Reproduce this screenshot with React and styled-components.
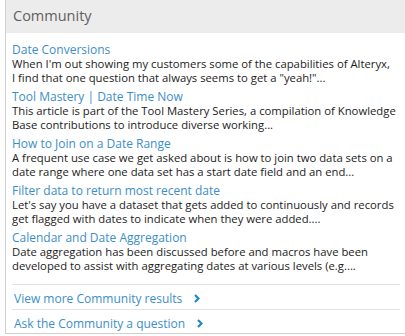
import React from "react";
import styled, { createGlobalStyle } from "styled-components";

const GlobalStyle = createGlobalStyle`
  body {
    margin: 0;
    background: #fff;
    font-family: "Segoe UI", "Open Sans", "Liberation Sans", sans-serif;
  }
`;

const Panel = styled.div`
  margin-left: 5px;
  width: 400px;
  height: 334px;
  box-sizing: border-box;
  border-left: 1px solid #cfcfcf;
  border-bottom: 1px solid #cfcfcf;
`;

const Header = styled.div`
  height: 33px;
  box-sizing: border-box;
  background: #ececec;
  padding: 6px 0 0 7px;
  font-size: 14.5px;
  line-height: 20px;
  color: #5f5f5f;
`;

const List = styled.div`
  padding: 10px 0 0 6px;
  display: flex;
  flex-direction: column;
  gap: 5px;
`;

const Item = styled.div`
  line-height: 14px;
`;

const Title = styled.a`
  display: block;
  font-size: 12px;
  color: #3c8ec8;
  text-decoration: none;
`;

const Summary = styled.p`
  margin: 0;
  font-size: 11.3px;
  white-space: pre-line;
  color: #1c1c1c;
`;

const Footer = styled.div`
  margin: 11px 0 0 6px;
  width: 388px;
`;

const FooterLink = styled.a`
  display: flex;
  align-items: center;
  gap: 12px;
  height: 22px;
  border-top: 1px solid #e3e3e3;
  padding: 2px 0 0 2px;
  box-sizing: content-box;
  font-size: 12px;
  color: #3c8ec8;
  text-decoration: none;
`;

const Chevron = () => (
  <svg width="6" height="9" viewBox="0 0 6 9">
    <path d="M1 1 L4.5 4.5 L1 8" fill="none" stroke="#1f88c8" strokeWidth="2.2" />
  </svg>
);

const items = [
  {
    title: "Date Conversions",
    text: "When I'm out showing my customers some of the capabilities of Alteryx,\nI find that one question that always seems to get a \"yeah!\"...",
  },
  {
    title: "Tool Mastery | Date Time Now",
    text: "This article is part of the Tool Mastery Series, a compilation of Knowledge\nBase contributions to introduce diverse working...",
  },
  {
    title: "How to Join on a Date Range",
    text: "A frequent use case we get asked about is how to join two data sets on a\ndate range where one data set has a start date field and an end...",
  },
  {
    title: "Filter data to return most recent date",
    text: "Let's say you have a dataset that gets added to continuously and records\nget flagged with dates to indicate when they were added....",
  },
  {
    title: "Calendar and Date Aggregation",
    text: "Date aggregation has been discussed before and macros have been\ndeveloped to assist with aggregating dates at various levels (e.g....",
  },
];

export default function App() {
  return (
    <>
      <GlobalStyle />
      <Panel>
        <Header>Community</Header>
        <List>
          {items.map((it) => (
            <Item key={it.title}>
              <Title href="#">{it.title}</Title>
              <Summary>{it.text}</Summary>
            </Item>
          ))}
        </List>
        <Footer>
          <FooterLink href="#">
            View more Community results <Chevron />
          </FooterLink>
          <FooterLink href="#">
            Ask the Community a question <Chevron />
          </FooterLink>
        </Footer>
      </Panel>
    </>
  );
}
